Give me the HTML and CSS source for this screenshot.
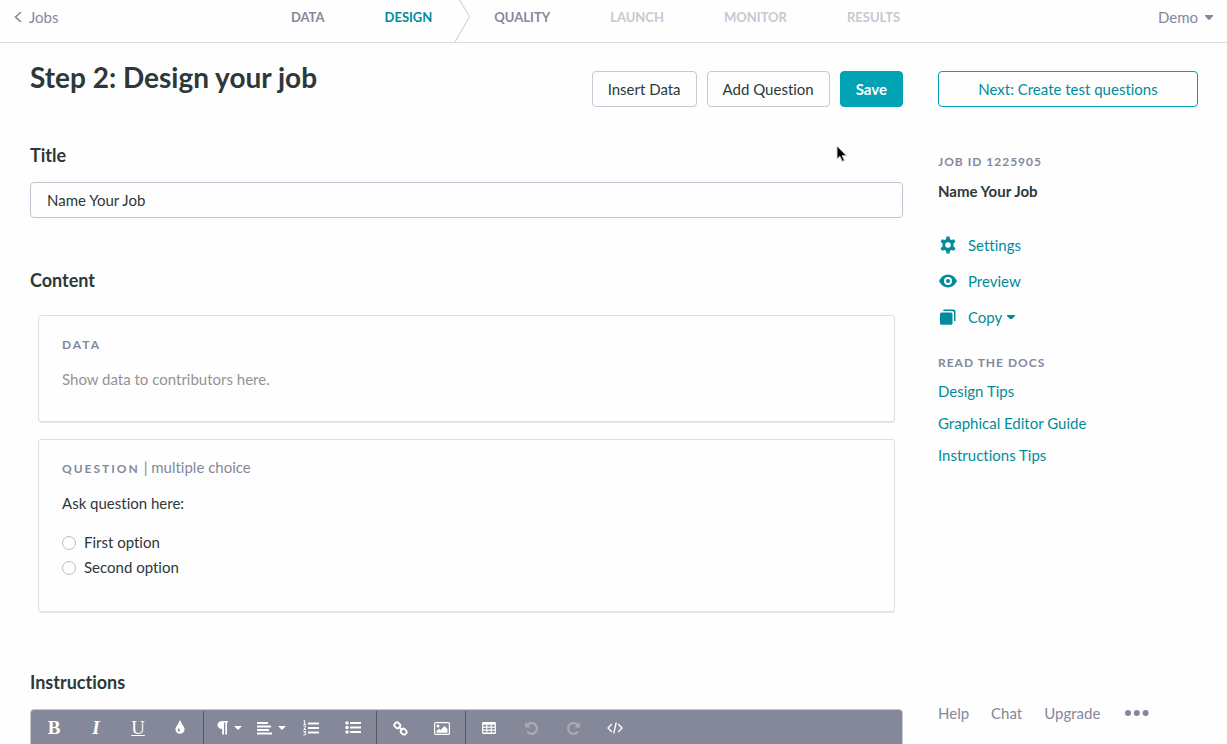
FILE: index.html
```html
<!DOCTYPE html>
<html lang="en">
<head>
<meta charset="utf-8">
<title>Design your job</title>
<link rel="stylesheet" href="styles.css">
</head>
<body>
<header class="topbar">
  <a class="back" href="#">
    <svg width="8" height="12" viewBox="0 0 8 12"><path d="M7 1 1.500 6 7 11" fill="none" stroke="currentColor" stroke-width="1.600"/></svg>
    Jobs
  </a>
  <nav class="steps">
    <a href="#">DATA</a>
    <a class="current" href="#">DESIGN</a>
    <svg class="divider" width="16" height="42" viewBox="0 0 16 42"><path d="M4 -1 14.500 16.500 0 42" fill="none" stroke="currentColor" stroke-width="1"/></svg>
    <a href="#">QUALITY</a>
    <a class="off" href="#">LAUNCH</a>
    <a class="off" href="#">MONITOR</a>
    <a class="off" href="#">RESULTS</a>
  </nav>
  <button class="account" type="button">Demo
    <svg width="8" height="5" viewBox="0 0 8 5"><path d="M0 0h8v1L4.700 4.700h-1.400L0 1z" fill="currentColor"/></svg>
  </button>
</header>

<div class="page">
  <main class="editor">
    <div class="heading">
      <h1>Step 2: Design your job</h1>
      <div class="actions">
        <button class="btn" type="button">Insert Data</button>
        <button class="btn" type="button">Add Question</button>
        <button class="btn primary" type="button">Save</button>
      </div>
    </div>

    <label class="section" for="job-title">Title</label>
    <input class="field" id="job-title" type="text" value="Name Your Job">

    <h2 class="section">Content</h2>
    <div class="cards">
      <section class="card">
        <h3 class="kind">DATA</h3>
        <p class="hint">Show data to contributors here.</p>
      </section>
      <section class="card">
        <h3 class="kind">QUESTION<span class="subkind"> | multiple choice</span></h3>
        <fieldset class="question">
          <legend>Ask question here:</legend>
          <label class="option"><input type="radio" name="answer">First option</label>
          <label class="option"><input type="radio" name="answer">Second option</label>
        </fieldset>
      </section>
    </div>

    <h2 class="section instructions">Instructions</h2>
    <div class="toolbar" role="toolbar" aria-label="Instructions formatting">
      <button type="button" class="bold" aria-label="Bold">B</button>
      <button type="button" class="italic" aria-label="Italic">I</button>
      <button type="button" class="underline" aria-label="Underline">U</button>
      <button type="button" aria-label="Colors"><svg width="16" height="16" viewBox="0 0 1792 1792"><path fill="currentColor" d="M896 1152q0-36-20-69-1-1-15.500-22.500t-25.500-38-25-44-21-50.500q-4-16-21-16t-21 16q-7 23-21 50.500t-25 44-25.500 38-15.500 22.500q-20 33-20 69 0 53 37.500 90.500t90.500 37.500 90.500-37.500 37.500-90.500zm512-128q0 212-150 362t-362 150-362-150-150-362q0-145 81-275 6-9 62.500-90.500t101-151 99.500-178 83-201.500q9-30 34-47t51-17 51.500 17 33.500 47q28 93 83 201.500t99.500 178 101 151 62.500 90.500q81 127 81 275z"/></svg></button>
      <span class="sep"></span>
      <button type="button" class="menu" aria-label="Paragraph format">
        <svg width="12" height="14" viewBox="0 0 12 14"><path fill="currentColor" d="M11 0v1.500h-1V13.500H8.300V1.500H7V13.500H5.200V8C2.200 8 .5 6.300 .5 4S2.300 0 5.200 0z"/></svg>
        <svg class="caret" width="8" height="4" viewBox="0 0 8 4"><path d="M0 0h8L4 4z" fill="currentColor"/></svg>
      </button>
      <button type="button" class="menu" aria-label="Align">
        <svg width="16" height="13" viewBox="0 0 16 13"><path fill="currentColor" d="M0 0h11v2H0zM0 3.500h14v2H0zM0 7h12v2H0zM0 10.500h15v2H0z"/></svg>
        <svg class="caret" width="8" height="4" viewBox="0 0 8 4"><path d="M0 0h8L4 4z" fill="currentColor"/></svg>
      </button>
      <button type="button" aria-label="Ordered list"><svg width="16" height="16" viewBox="0 0 16 16"><path fill="currentColor" d="M5 2.500h11v2H5zM5 7h11v2H5zM5 11.500h11v2H5z"/><path fill="none" stroke="currentColor" d="M.5 1.200 1.700 .6v3.900M.3 4.500h2.800M.5 6.300h2v1.200L.6 9.500h2.600M.5 11.500h2.200L1.600 13q1.400 0 1.400 1.100T.4 15"/></svg></button>
      <button type="button" aria-label="Unordered list"><svg width="16" height="14" viewBox="0 0 16 14"><path fill="currentColor" d="M5 1h11v2H5zM5 5.500h11v2H5zM5 10h11v2H5z"/><g fill="currentColor"><circle cx="2" cy="2" r="1.700"/><circle cx="2" cy="6.500" r="1.700"/><circle cx="2" cy="11" r="1.700"/></g></svg></button>
      <span class="sep"></span>
      <button type="button" aria-label="Insert link"><svg width="15" height="15" viewBox="0 0 15 15"><g fill="none" stroke="currentColor" stroke-width="1.900" transform="rotate(45 7.500 7.500)"><rect x="0" y="5" width="6" height="5" rx="2.300"/><rect x="9" y="5" width="6" height="5" rx="2.300"/><path d="M4.800 7.500h5.400" stroke-width="1.600"/></g></svg></button>
      <button type="button" aria-label="Insert image"><svg width="16" height="13" viewBox="0 0 16 13"><rect x=".6" y=".6" width="14.800" height="11.800" rx="1" fill="none" stroke="currentColor" stroke-width="1.200"/><circle cx="4" cy="4" r="1.500" fill="currentColor"/><path fill="currentColor" d="M2.500 10.800V9l2.500-2.500 1.500 1.500 4-4 3 3v3.800z"/></svg></button>
      <span class="sep"></span>
      <button type="button" aria-label="Insert table"><svg width="14" height="12" viewBox="0 0 15 13"><path fill="currentColor" fill-rule="evenodd" d="M1.200 0h12.600Q15 0 15 1.200v10.600Q15 13 13.800 13H1.200Q0 13 0 11.800V1.200Q0 0 1.200 0zM1.200 3v2h3.400V3zm4.500 0v2h3.600V3zm4.700 0v2h3.400V3zM1.200 6.200v2h3.400v-2zm4.500 0v2h3.600v-2zm4.700 0v2h3.400v-2zM1.200 9.400v2h3.400v-2zm4.500 0v2h3.600v-2zm4.700 0v2h3.400v-2z"/></svg></button>
      <button type="button" disabled aria-label="Undo"><svg width="15" height="15" viewBox="0 0 1792 1792"><path fill="currentColor" d="M1664 896q0 156-61 298t-164 245-245 164-298 61q-172 0-327-72.500t-264-204.500q-7-10-6.500-22.500t8.500-20.500l137-138q10-9 25-9 16 2 23 12 73 95 179 147t225 52q104 0 198.500-40.500t163.500-109.500 109.500-163.500 40.500-198.500-40.500-198.500-109.500-163.500-163.500-109.500-198.500-40.500q-98 0-188 35.500t-160 101.500l137 138q31 30 14 69-17 40-59 40h-448q-26 0-45-19t-19-45v-448q0-42 40-59 39-17 69 14l130 129q107-101 244.500-156.500t284.500-55.500q156 0 298 61t245 164 164 245 61 298z"/></svg></button>
      <button type="button" disabled aria-label="Redo"><svg width="15" height="15" viewBox="0 0 1792 1792"><path fill="currentColor" transform="translate(1792 0) scale(-1 1)" d="M1664 896q0 156-61 298t-164 245-245 164-298 61q-172 0-327-72.500t-264-204.500q-7-10-6.500-22.500t8.500-20.500l137-138q10-9 25-9 16 2 23 12 73 95 179 147t225 52q104 0 198.500-40.500t163.500-109.500 109.500-163.500 40.500-198.500-40.500-198.500-109.500-163.500-163.500-109.500-198.500-40.500q-98 0-188 35.500t-160 101.500l137 138q31 30 14 69-17 40-59 40h-448q-26 0-45-19t-19-45v-448q0-42 40-59 39-17 69 14l130 129q107-101 244.500-156.500t284.500-55.500q156 0 298 61t245 164 164 245 61 298z"/></svg></button>
      <button type="button" aria-label="Code view"><svg width="16" height="12" viewBox="0 0 16 12"><path fill="none" stroke="currentColor" stroke-width="1.300" d="M4.800 2 1 6l3.800 4M11.200 2 15 6l-3.800 4M9.300 .5 6.700 11.500"/></svg></button>
    </div>
  </main>

  <aside class="side">
    <button class="btn next" type="button">Next: Create test questions</button>
    <h2 class="label">JOB ID 1225905</h2>
    <p class="job-name">Name Your Job</p>
    <ul class="tools">
      <li><a href="#"><svg width="20" height="18" viewBox="0 0 20 18"><path fill="currentColor" fill-rule="evenodd" d="M8.500 .6h3l.5 2.600 1.500 .9 2.500-.9 1.500 2.600-2 1.700v3l2 1.700-1.500 2.600-2.500-.9-1.500 .9-.5 2.600h-3L8 14.800l-1.500-.9-2.500 .9-1.500-2.600 2-1.700v-3l-2-1.700L4 3.200l2.500 .9L8 3.200zM10 6.200a2.800 2.800 0 1 0 0 5.600 2.800 2.800 0 0 0 0-5.600z"/></svg>Settings</a></li>
      <li><a href="#"><svg width="20" height="18" viewBox="0 0 20 18"><path fill="currentColor" fill-rule="evenodd" d="M1 9C3 4.800 6 2.500 10 2.500S17 4.800 19 9c-2 4.200-5 6.500-9 6.500S3 13.200 1 9zm9-4a4 4 0 1 0 0 8 4 4 0 0 0 0-8z"/><circle cx="10" cy="9" r="2.100" fill="currentColor"/></svg>Preview</a></li>
      <li><button class="copy" type="button"><svg width="20" height="18" viewBox="0 0 20 18"><path fill="currentColor" d="M6.200 1.500h9.300q2 0 2 2v9q0 .8-1.500 .8V4.800Q16 3 14.200 3H5q0-1.500 1.200-1.500z"/><rect x="2" y="4.500" width="12.500" height="12.300" rx="1.500" fill="currentColor"/></svg>Copy<svg class="caret" width="8" height="4" viewBox="0 0 8 4"><path d="M0 0h8v1L5 4H3L0 1z" fill="currentColor"/></svg></button></li>
    </ul>
    <h2 class="label docs">READ THE DOCS</h2>
    <ul class="links">
      <li><a href="#">Design Tips</a></li>
      <li><a href="#">Graphical Editor Guide</a></li>
      <li><a href="#">Instructions Tips</a></li>
    </ul>
    <footer class="foot">
      <a href="#">Help</a>
      <a href="#">Chat</a>
      <a href="#">Upgrade</a>
      <button type="button" aria-label="More"><svg width="28" height="6" viewBox="0 0 28 6"><g fill="currentColor"><circle cx="6" cy="3" r="3"/><circle cx="14.800" cy="3" r="3"/><circle cx="23.600" cy="3" r="3"/></g></svg></button>
    </footer>
  </aside>
</div>

<svg class="pointer" width="12" height="18" viewBox="0 0 12 18"><path d="M1 1v13l3-2.600 2.200 5 2.200-1-2.200-4.700h4.300z" fill="#000" stroke="#d4d4d8" stroke-width="1"/></svg>
</body>
</html>
```

FILE: styles.css
```css
* { box-sizing: border-box; }

body {
  margin: 0;
  height: 100vh;
  display: flex;
  flex-direction: column;
  overflow: hidden;
  background: #fefefe;
  color: #2d3839;
  font: 15px/20px Lato, sans-serif;
  font-variant-ligatures: none;
}

h1, h2, h3, p, ul, fieldset { margin: 0; padding: 0; border: 0; }
ul { list-style: none; }
a { color: inherit; text-decoration: none; }
button { font: inherit; font-variant-ligatures: none; color: inherit; background: none; border: 0; padding: 0; }
svg { display: block; flex: none; }

.topbar {
  flex: none;
  display: grid;
  grid-template-columns: 1fr auto 1fr;
  height: 43px;
  padding: 0 14px;
  border-bottom: 1px solid #dcdce0;
  color: #84889b;
}
.back, .account {
  display: flex;
  align-items: center;
  height: 34px;
}
.back { gap: 7px; }
.account { gap: 7px; justify-self: end; }
.steps {
  display: flex;
  gap: 60px;
  margin-right: 36px;
  font-size: 13px;
  font-weight: 700;
  line-height: 34px;
}
.steps .current { color: #008c9b; }
.steps .off { color: #c7c8d4; }
.divider { margin: 0 -37px; color: #c7c8d4; }

.page {
  flex: 1;
  min-height: 0;
  display: grid;
  grid-template-columns: minmax(0, 1fr) 260px;
  grid-template-rows: minmax(0, 1fr);
  gap: 35px;
  padding: 0 29px 0 30px;
}

.heading {
  display: flex;
  justify-content: space-between;
  align-items: flex-end;
  height: 64px;
}
h1 { font-size: 28px; line-height: 36px; padding-bottom: 12px; }
.actions { display: flex; gap: 10px; }
.btn {
  height: 36px;
  padding: 0 15px;
  border: 1px solid #c7c8d6;
  border-radius: 4px;
}
.btn.primary {
  background: #00a2b4;
  border-color: #00a2b4;
  color: #fff;
  font-weight: 700;
}

.section {
  display: block;
  font-size: 18px;
  font-weight: 700;
  line-height: 24px;
}
label.section { margin: 36px 0 15px; }
.field {
  display: block;
  width: 100%;
  height: 36px;
  padding: 0 16px;
  border: 1px solid #c3c3d3;
  border-radius: 4px;
  background: transparent;
  color: inherit;
  font: inherit;
}
h2.section { margin: 50px 0 23px; }
.cards {
  display: flex;
  flex-direction: column;
  gap: 17px;
  padding: 0 8px;
}
.card {
  padding: 19px 23px 32px;
  border: 1px solid #dfdfe6;
  border-radius: 3px;
  box-shadow: 0 1px 0 #e6e6ec;
}
.kind {
  color: #84889b;
  font-size: 12px;
  letter-spacing: 2px;
}
.subkind { font-size: 15px; line-height: 1; font-weight: 400; letter-spacing: 0; }
.hint { margin-top: 14px; color: #949494; }
.question { margin-top: 14px; }
.question legend { padding: 0; margin-bottom: 16px; }
.option {
  display: flex;
  align-items: center;
  gap: 8px;
  height: 25px;
}
.option input {
  appearance: none;
  width: 14px;
  height: 14px;
  margin: 2px 0 0;
  border: 1px solid #bcbcbc;
  border-radius: 50%;
}
h2.instructions { margin: 58px 0 15px; }

.toolbar {
  display: flex;
  height: 60px;
  padding: 1px 2px;
  border: 1px solid #c5c8d0;
  border-radius: 4px 4px 0 0;
  background: #858899;
  color: #fff;
}
.toolbar button {
  display: flex;
  align-items: center;
  justify-content: center;
  gap: 5px;
  width: 42px;
  height: 34px;
}
.toolbar .menu { padding-left: 4px; }
.toolbar button:disabled { color: #a9abb7; }
.toolbar .bold, .toolbar .italic, .toolbar .underline {
  font-family: "Liberation Serif", serif;
  font-size: 19px;
}
.toolbar .bold { font-weight: 700; }
.toolbar .italic { font-style: italic; font-weight: 700; }
.toolbar .underline { text-decoration: underline; }
.sep { flex: none; width: 1px; margin: 0 2px; background: #55585f; }

.side { display: flex; flex-direction: column; padding-top: 28px; }
.next { border-color: #00a2b4; color: #008c9b; }
.label {
  margin-top: 45px;
  color: #84889b;
  font-size: 12px;
  letter-spacing: 1px;
}
.job-name { margin-top: 9px; font-weight: 700; }
.tools { margin-top: 26px; color: #008c9b; }
.tools a, .tools button {
  display: flex;
  align-items: center;
  gap: 10px;
  height: 36px;
}
.tools .copy .caret { margin-left: -5px; }
.label.docs { margin-top: 18px; }
.links { margin-top: 2px; color: #008c9b; line-height: 32px; }
.foot {
  display: flex;
  align-items: center;
  gap: 22px;
  margin-top: auto;
  padding-bottom: 21px;
  color: #84889b;
}

.pointer { position: absolute; left: 836px; top: 145px; }
```
